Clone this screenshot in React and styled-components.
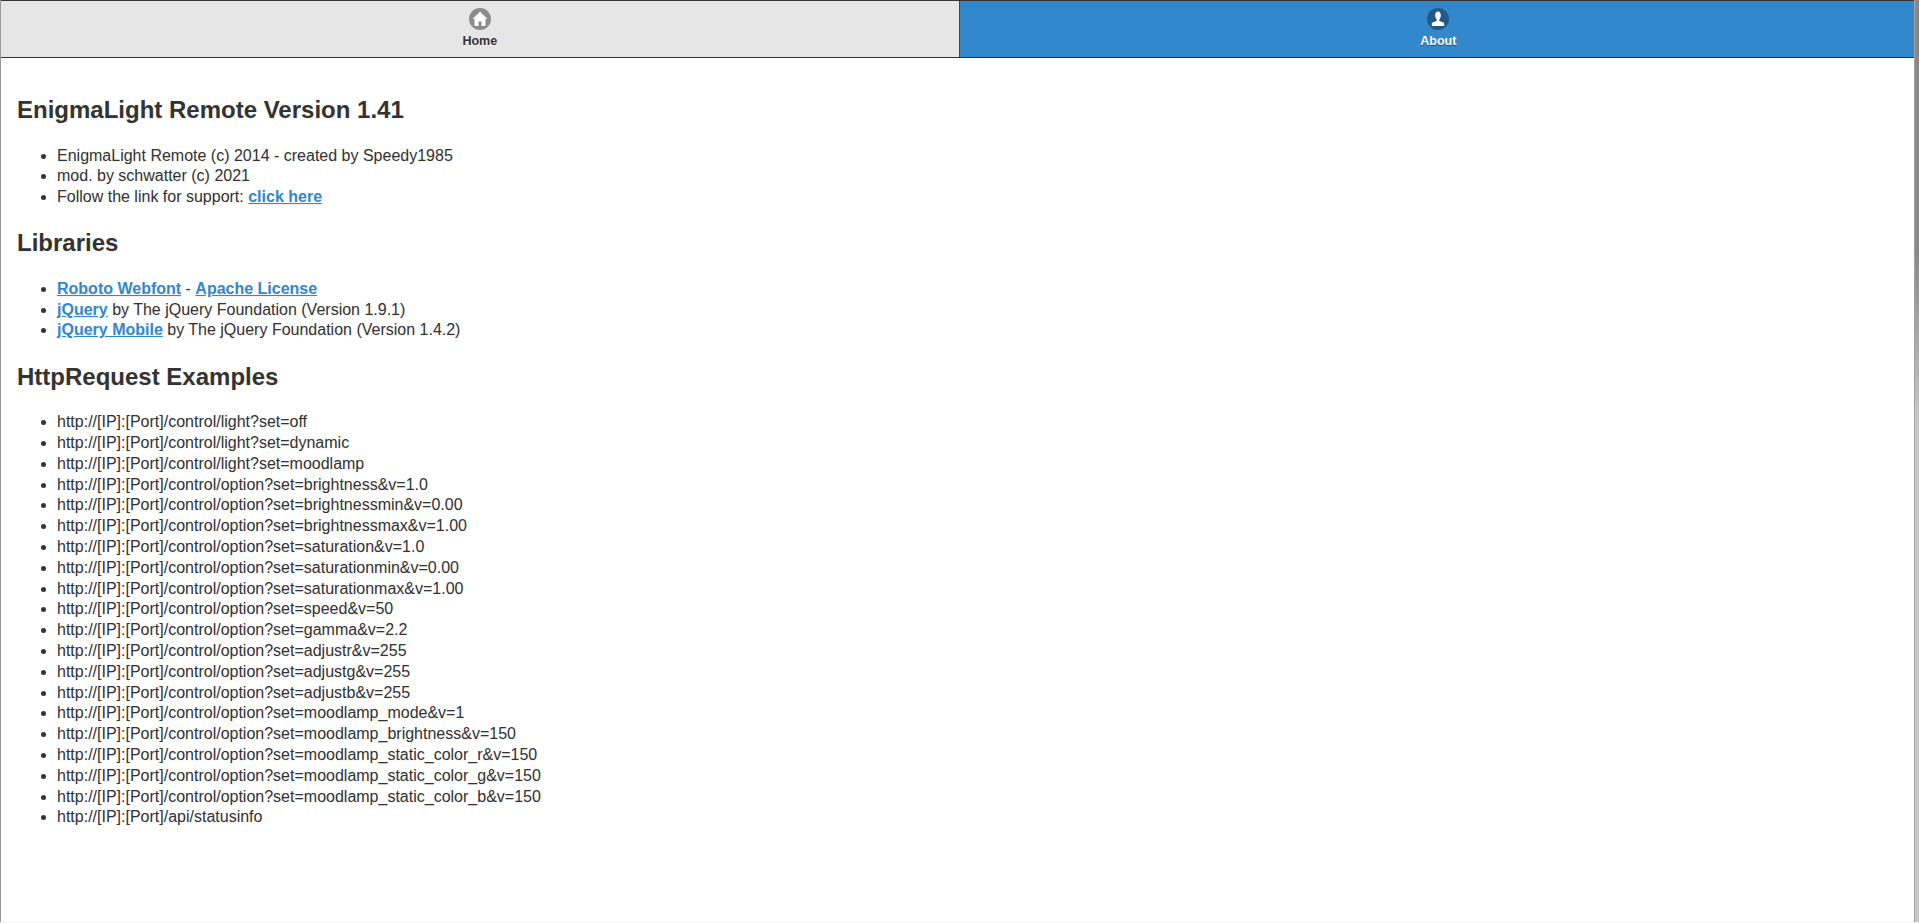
import styled, { createGlobalStyle } from "styled-components";

const GlobalStyle = createGlobalStyle`
  html, body {
    margin: 0;
    padding: 0;
    background: #fff;
  }
  body {
    font-family: "Liberation Sans", Arial, sans-serif;
    font-size: 16px;
    line-height: 1.3;
    color: #333;
    text-shadow: 0 1px 0 #f3f3f3;
  }
`;

const Page = styled.div`
  position: relative;
  box-sizing: border-box;
  height: 923px;
  overflow: hidden;
  border-bottom: 1px solid #f2f2f2;

  &::before {
    content: "";
    position: absolute;
    top: 0;
    bottom: 0;
    left: 0;
    width: 1px;
    background: #999;
  }

  &::after {
    content: "";
    position: absolute;
    top: 0;
    bottom: 0;
    right: 0;
    width: 5px;
    box-sizing: border-box;
    border-left: 1px solid #a3a3a3;
    background: linear-gradient(#888 0, #888 250px, #c8c8c8 420px);
  }
`;

const Navbar = styled.nav`
  display: grid;
  grid-template-columns: 49.95% 49.95%;
  height: 58px;
  box-sizing: border-box;
  border-top: 1px solid #333;
  border-bottom: 1px solid #333;
  background: #333;
`;

const NavButton = styled.a`
  display: flex;
  flex-direction: column;
  align-items: center;
  padding-top: 7px;
  gap: 4px;
  font-size: 12.5px;
  line-height: 15px;
  font-weight: bold;
  background: ${(p) => (p.$active ? "#3388cc" : "#e6e6e6")};
  color: ${(p) => (p.$active ? "#fff" : "#333")};
  text-shadow: 0 1px 0 ${(p) => (p.$active ? "#005599" : "#f3f3f3")};
  border-left: 1px solid ${(p) => (p.$active ? "#1f4f75" : "#c4c4c4")};
`;

const IconCircle = styled.span`
  display: block;
  width: 22px;
  height: 22px;
  border-radius: 50%;
  background: ${(p) => (p.$active ? "#1f5a8a" : "#8c8c8c")};
`;

const IconSvg = styled.svg`
  display: block;
  width: 22px;
  height: 22px;
  fill: #fff;
`;

const Content = styled.main`
  padding: 16.5px 17px;
`;

const Heading = styled.h2`
  font-size: 24px;
  font-weight: bold;
  margin: 19.42px 0 20.42px;
  color: #333;
`;

const List = styled.ul`
  margin: 16px 0;
  padding: 0 0 0 40px;
`;

const Link = styled.a`
  color: #3388cc;
  font-weight: bold;
  text-decoration: underline;
`;

const HomeIcon = () => (
  <IconCircle>
    <IconSvg viewBox="0 0 22 22">
      <path d="M11 3.5 L3.5 11 L5.5 11 L5.5 18 L9.5 18 L9.5 13.5 L12.5 13.5 L12.5 18 L16.5 18 L16.5 11 L18.5 11 Z" />
    </IconSvg>
  </IconCircle>
);

const UserIcon = () => (
  <IconCircle $active>
    <IconSvg viewBox="0 0 22 22">
      <path d="M11 3.5 C9 3.5 8.2 5.2 8.2 7.5 C8.2 9.4 9 10.8 9.8 11.7 L9.8 13 C8 13.6 5.3 14 4.8 15.5 L4.8 18 L17.2 18 L17.2 15.5 C16.7 14 14 13.6 12.2 13 L12.2 11.7 C13 10.8 13.8 9.4 13.8 7.5 C13.8 5.2 13 3.5 11 3.5 Z" />
    </IconSvg>
  </IconCircle>
);

const requests = [
  "control/light?set=off",
  "control/light?set=dynamic",
  "control/light?set=moodlamp",
  "control/option?set=brightness&v=1.0",
  "control/option?set=brightnessmin&v=0.00",
  "control/option?set=brightnessmax&v=1.00",
  "control/option?set=saturation&v=1.0",
  "control/option?set=saturationmin&v=0.00",
  "control/option?set=saturationmax&v=1.00",
  "control/option?set=speed&v=50",
  "control/option?set=gamma&v=2.2",
  "control/option?set=adjustr&v=255",
  "control/option?set=adjustg&v=255",
  "control/option?set=adjustb&v=255",
  "control/option?set=moodlamp_mode&v=1",
  "control/option?set=moodlamp_brightness&v=150",
  "control/option?set=moodlamp_static_color_r&v=150",
  "control/option?set=moodlamp_static_color_g&v=150",
  "control/option?set=moodlamp_static_color_b&v=150",
  "api/statusinfo",
];

const App = () => {
  return (
    <Page>
      <GlobalStyle />
      <Navbar>
        <NavButton>
          <HomeIcon />
          Home
        </NavButton>
        <NavButton $active>
          <UserIcon />
          About
        </NavButton>
      </Navbar>
      <Content>
        <Heading>EnigmaLight Remote Version 1.41</Heading>
        <List>
          <li>EnigmaLight Remote (c) 2014 - created by Speedy1985</li>
          <li>mod. by schwatter (c) 2021</li>
          <li>
            Follow the link for support: <Link>click here</Link>
          </li>
        </List>
        <Heading>Libraries</Heading>
        <List>
          <li>
            <Link>Roboto Webfont</Link> - <Link>Apache License</Link>
          </li>
          <li>
            <Link>jQuery</Link> by The jQuery Foundation (Version 1.9.1)
          </li>
          <li>
            <Link>jQuery Mobile</Link> by The jQuery Foundation (Version 1.4.2)
          </li>
        </List>
        <Heading>HttpRequest Examples</Heading>
        <List>
          {requests.map((r) => (
            <li key={r}>http://[IP]:[Port]/{r}</li>
          ))}
        </List>
      </Content>
    </Page>
  );
};

export default App;
